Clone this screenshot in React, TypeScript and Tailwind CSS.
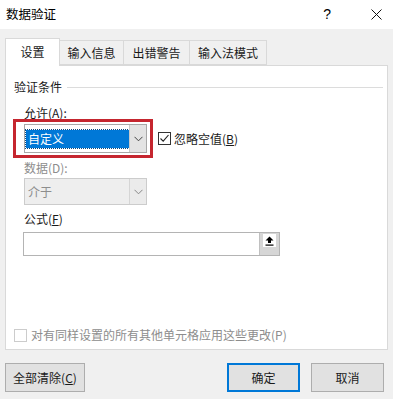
import React from "react";

const font = { fontFamily: '"Noto Sans CJK SC", "Noto Sans", sans-serif' };

function Chevron({ color = "#444" }: { color?: string }) {
  return (
    <svg width="9" height="6" viewBox="0 0 9 6">
      <path d="M0.5 0.8 L4.5 4.8 L8.5 0.8" fill="none" stroke={color} strokeWidth="1" />
    </svg>
  );
}

function Check({ checked, disabled }: { checked?: boolean; disabled?: boolean }) {
  return (
    <div
      className={`w-[13px] h-[13px] border flex items-center justify-center ${
        disabled ? "border-[#cccccc] bg-white" : "border-[#333333] bg-white"
      }`}
    >
      {checked && (
        <svg width="11" height="11" viewBox="0 0 11 11">
          <path d="M1.5 5.5 L4.2 8.2 L9.5 2" fill="none" stroke="#222" strokeWidth="1.1" />
        </svg>
      )}
    </div>
  );
}

export default function App() {
  return (
    <div className="w-[393px] h-[399px] bg-[#f0f0f0] flex flex-col text-[12px] text-[#1a1a1a] overflow-hidden" style={font}>
      {/* title bar */}
      <div className="h-[29px] bg-white flex items-center shrink-0">
        <span className="ml-[6px] text-[12.5px] text-black">数据验证</span>
        <span className="ml-auto mr-[40px] text-[14px] text-black" style={{ fontFamily: '"Liberation Sans", sans-serif' }}>?</span>
        <svg className="mr-[11px]" width="11" height="11" viewBox="0 0 11 11">
          <path d="M0.5 0.5 L10.5 10.5 M10.5 0.5 L0.5 10.5" stroke="#111" strokeWidth="1" />
        </svg>
      </div>

      {/* tabs */}
      <div className="flex items-end pl-[5px] pt-[9px] relative z-10">
        <div className="h-[28px] w-[55px] bg-white border border-b-0 border-[#d9d9d9] flex items-center justify-center -mb-px pb-[2px]">
          设置
        </div>
        <div className="h-[25px] w-[64px] border border-l-0 border-[#d9d9d9] flex items-center justify-center">输入信息</div>
        <div className="h-[25px] w-[66px] border border-l-0 border-[#d9d9d9] flex items-center justify-center">出错警告</div>
        <div className="h-[25px] w-[77px] border border-l-0 border-[#d9d9d9] flex items-center justify-center">输入法模式</div>
      </div>

      {/* panel */}
      <div className="mx-[5px] h-[285px] bg-white border border-[#d9d9d9] flex flex-col shrink-0">
        <div className="mt-[13px] h-4 flex items-center pl-[8px] pr-[4px]">
          <span className="leading-4">验证条件</span>
          <div className="flex-1 ml-[5px] h-px bg-[#dcdcdc]" />
        </div>

        <div className="mt-[12px] h-[12px] leading-[12px] pl-[18px] flex items-center">
          允许(<span className="underline">A</span>):
        </div>

        <div className="h-[39px] flex items-center">
          <div className="ml-[7px] w-[140px] h-[39px] border-[3px] border-[#c5262f] pl-[8px] pr-[3px] pt-[2px] pb-[2px]">
            <div className="w-[123px] h-[29px] border border-[#a8a8a8] bg-white flex">
              <div className="flex-1 flex items-center pl-[1px]">
                <div className="w-[103px] h-[18px] bg-[#0078d7] text-white flex items-center pl-[2px] outline-1 outline-dotted outline-[#0a4a82]">
                  自定义
                </div>
              </div>
              <div className="w-[17px] bg-[#e3e3e3] border-l border-[#c9c9c9] flex items-center justify-center">
                <Chevron />
              </div>
            </div>
          </div>
          <div className="ml-[5px] flex items-center">
            <Check checked />
            <span className="ml-[3px]">
              忽略空值(<span className="underline">B</span>)
            </span>
          </div>
        </div>

        <div className="mt-[4px] h-[12px] leading-[12px] pl-[18px] text-[#8d8d8d] flex items-center">数据(D):</div>

        <div className="mt-[4px] ml-[18px] w-[123px] h-[27px] border border-[#cccccc] bg-[#eeeeee] flex">
          <div className="flex-1 flex items-center pl-[3px] text-[#8d8d8d]">介于</div>
          <div className="w-[17px] bg-[#ebebeb] border-l border-[#d5d5d5] flex items-center justify-center">
            <Chevron color="#888" />
          </div>
        </div>

        <div className="mt-[8px] h-[12px] leading-[12px] pl-[18px] flex items-center">
          公式(<span className="underline">F</span>)
        </div>

        <div className="mt-[7px] ml-[17px] w-[257px] h-[24px] border border-[#b4b4b4] bg-white flex">
          <div className="flex-1" />
          <div className="w-[20px] bg-[#d6d6d6] border-l border-[#c0c0c0] flex justify-center pt-[1px]">
            <div className="w-[13px] h-[13px] bg-white flex items-center justify-center">
              <svg width="9" height="10" viewBox="0 0 9 10">
                <path d="M4.5 0.5 L8.5 4.5 L6 4.5 L6 7 L3 7 L3 4.5 L0.5 4.5 Z" fill="#000" />
                <rect x="0.5" y="8.5" width="8" height="1.2" fill="#000" />
              </svg>
            </div>
          </div>
        </div>

        <div className="mt-[70px] ml-[8px] flex items-center">
          <Check disabled />
          <span className="ml-[4px] text-[#8d8d8d]">对有同样设置的所有其他单元格应用这些更改(P)</span>
        </div>
      </div>

      {/* bottom buttons */}
      <div className="mt-[13px] flex px-[5px]">
        <div className="w-[80px] h-[29px] bg-[#e1e1e1] border border-[#adadad] flex items-center justify-center">
          全部清除(<span className="underline">C</span>)
        </div>
        <div className="ml-auto w-[73px] h-[29px] bg-[#e1e1e1] border-2 border-[#0078d7] flex items-center justify-center">
          确定
        </div>
        <div className="ml-[11px] mr-[4px] w-[73px] h-[29px] bg-[#e1e1e1] border border-[#adadad] flex items-center justify-center">
          取消
        </div>
      </div>
    </div>
  );
}
